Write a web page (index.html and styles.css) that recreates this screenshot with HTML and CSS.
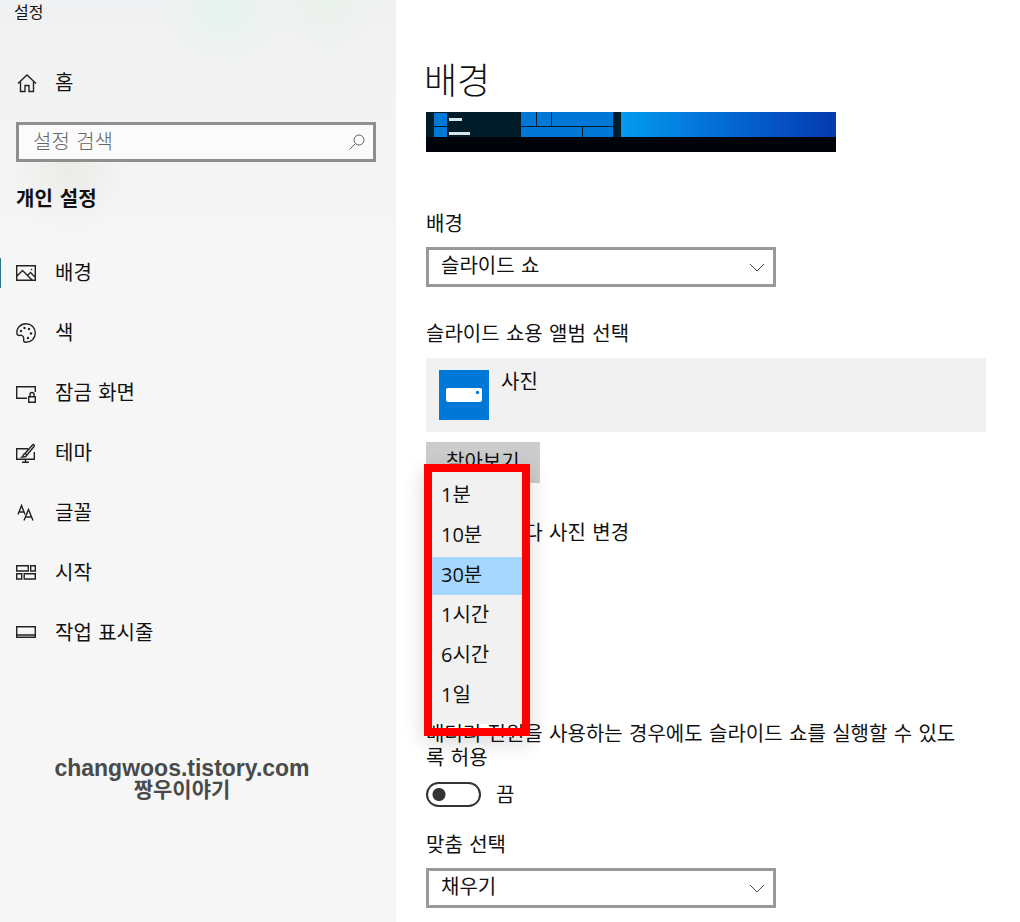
FILE: index.html
```html
<!DOCTYPE html>
<html lang="ko">
<head>
    <meta charset="UTF-8">
    <meta name="viewport" content="width=device-width, initial-scale=1.0">
    <title>설정</title>
    <link rel="stylesheet" href="styles.css">
</head>
<body>
<aside class="sidebar">
    <div class="window-title">설정</div>

    <a class="nav-item home" href="#">
        <svg class="icon" viewBox="0 0 20 20"><path d="M2 10.500 11 2l9 8.500M4.500 9v9.500h4.500v-6h4v6h4.500V9"/></svg>
        <span>홈</span>
    </a>

    <form class="search">
        <input type="search" aria-label="설정 검색" placeholder="설정 검색">
        <svg class="search-icon" viewBox="0 0 16 16"><circle cx="10" cy="6" r="5"/><path d="M6.500 9.500.5 15.500"/></svg>
    </form>

    <h2 class="section">개인 설정</h2>

    <nav>
        <a class="nav-item active" href="#">
            <svg class="icon" viewBox="0 0 20 20"><path d="M.7 2.700h18.600v14.600H.7zM1 13l5.500-5.500 9.500 9.500M11.500 12.500l3-3 4.500 4.500"/><circle class="dot" cx="15.500" cy="6.500" r=".8"/></svg>
            <span>배경</span>
        </a>
        <a class="nav-item" href="#">
            <svg class="icon" viewBox="0 0 20 20"><path d="M1 11C0 5 4.500 .8 10 .8c5.500 0 9.300 4 9.300 9.200 0 5.500-4.300 9.300-9.300 9.300-3.500 0-2-2.500-2.300-4.300-.3-1.500-1-2-1.700-2.500C4.500 11.500 2 14 1 11z"/><circle class="dot" cx="5" cy="8" r="1.200"/><circle class="dot" cx="8.500" cy="5" r="1.200"/><circle class="dot" cx="13" cy="6" r="1.200"/><circle class="dot" cx="15" cy="10.500" r="1.200"/><circle class="dot" cx="12" cy="15" r="1.200"/></svg>
            <span>색</span>
        </a>
        <a class="nav-item" href="#">
            <svg class="icon" viewBox="0 0 20 20"><path d="M11 15.300H.7V3.700h18.600V9M12.700 13.700h6.600v5.600h-6.600zM14 13.500V11.500a2 2 0 0 1 4 0v2"/></svg>
            <span>잠금 화면</span>
        </a>
        <a class="nav-item" href="#">
            <svg class="icon" viewBox="0 0 20 20"><path d="M12 5.700H.7v10.600h17.600V9M9.500 16.500v2.500M6 19.200h7M9 10.500 16.500 2c1-1 2.500.2 1.500 1.500L11 12M9 10.500l2 1.500c-.5 2-2.500 2-5 2 1.500-1 1-3 3-3.500z"/></svg>
            <span>테마</span>
        </a>
        <a class="nav-item" href="#">
            <svg class="icon" viewBox="0 0 20 20"><path d="M2 11.500 5.500 2.500 9 11.500M3.300 9h4.400M8 17.500l4.500-11L17 17.500M9.500 14h6"/></svg>
            <span>글꼴</span>
        </a>
        <a class="nav-item" href="#">
            <svg class="icon" viewBox="0 0 20 20"><path d="M.7 2.700h11.600v5.300H.7zM14.700 2.700h4.600v5.300h-4.600zM.7 10.700h5v5.300h-5zM8.200 10.700h11.100v5.300H8.200z"/></svg>
            <span>시작</span>
        </a>
        <a class="nav-item" href="#">
            <svg class="icon" viewBox="0 0 20 20"><path d="M.7 3.700h18.600v10.600H.7zM1 12h18"/></svg>
            <span>작업 표시줄</span>
        </a>
    </nav>

    <div class="credit">
        <div class="credit-url">changwoos.tistory.com</div>
        <div>짱우이야기</div>
    </div>
</aside>

<main class="content">
    <h1>배경</h1>

    <svg class="preview" viewBox="0 0 410 40" aria-hidden="true">
        <defs>
            <linearGradient id="wallpaper" x1="0" y1="0" x2="1" y2="0">
                <stop offset="0" stop-color="#039cee"/>
                <stop offset="0.5" stop-color="#0468d4"/>
                <stop offset="1" stop-color="#0539b0"/>
            </linearGradient>
        </defs>
        <path fill="#000408" d="M0 0h410v40H0z"/>
        <path fill="#001c28" d="M0 0h195v25H0z"/>
        <path fill="#0078d7" d="M8 1h13v13H8zM8 15h13v10H8zM95 0h15v14H95zM111 0h14v14h-14zM126 0h61v14h-61zM95 15h61v10H95zM157 15h30v10h-30z"/>
        <path fill="#d5e5e8" d="M23 6h13v3H23zM23 20h21v3H23z"/>
        <path fill="url(#wallpaper)" d="M195 0h215v25H195z"/>
    </svg>

    <div class="field background">
        <label for="background">배경</label>
        <div class="select">
            <select id="background"><option>슬라이드 쇼</option></select>
            <svg viewBox="0 0 16 10"><path d="m1 1 7 7 7-7"/></svg>
        </div>
    </div>

    <div class="field albums">
        <h3>슬라이드 쇼용 앨범 선택</h3>
        <div class="album">
            <svg class="drive" viewBox="0 0 50 50"><path fill="#0078d7" d="M0 0h50v50H0z"/><rect x="7" y="18" width="36" height="14" rx="2" fill="#fff"/><circle cx="38.500" cy="22.500" r="1.700" fill="#0078d7"/></svg>
            <span>사진</span>
        </div>
        <button class="browse" type="button">찾아보기</button>
    </div>

    <div class="field interval">
        <label for="interval">다음 간격마다 사진 변경</label>
        <div class="interval-select">
            <select id="interval"><option>30분</option></select>
            <div class="highlight">
                <ul class="menu" role="listbox">
                    <li role="option">1분</li>
                    <li role="option">10분</li>
                    <li role="option" class="selected" aria-selected="true">30분</li>
                    <li role="option">1시간</li>
                    <li role="option">6시간</li>
                    <li role="option">1일</li>
                </ul>
            </div>
        </div>
    </div>

    <div class="field battery">
        <label for="battery">배터리 전원을 사용하는 경우에도 슬라이드 쇼를 실행할 수 있도록 허용</label>
        <div class="toggle">
            <input id="battery" type="checkbox" role="switch">
            <span>끔</span>
        </div>
    </div>

    <div class="field">
        <label for="fit">맞춤 선택</label>
        <div class="select">
            <select id="fit"><option>채우기</option></select>
            <svg viewBox="0 0 16 10"><path d="m1 1 7 7 7-7"/></svg>
        </div>
    </div>
</main>
</body>
</html>
```
FILE: styles.css
```css
* {
    box-sizing: border-box;
}

body {
    display: flex;
    min-height: 100vh;
    margin: 0;
    background-color: #fff;
    color: #111;
    font-family: "DejaVu Sans", "Noto Sans CJK KR", sans-serif;
    font-size: 20px;
    font-weight: 400;
    line-height: 24px;
}

input, select, button {
    font: inherit;
    color: inherit;
    border-radius: 0;
}

h1, h2, h3, ul {
    margin: 0;
    padding: 0;
    font-size: inherit;
    font-weight: inherit;
}

/* Sidebar */
.sidebar {
    flex: 0 0 396px;
    background:
        radial-gradient(circle at 225px 5px, #e4f3ed, transparent 60px),
        radial-gradient(circle at 325px 0, #e9f1ea, transparent 50px),
        radial-gradient(circle at 70px 170px, #ebebe7, transparent 60px),
        linear-gradient(#f0f1f2, #f6f6f6 260px);
}

.window-title {
    padding: 1px 0 0 14px;
    font-size: 16px;
}

.nav-item {
    display: flex;
    align-items: center;
    gap: 19px;
    height: 60px;
    padding-left: 16px;
    color: inherit;
    text-decoration: none;
}

.home {
    margin: 28px 0 9px;
}

.icon {
    width: 20px;
    height: 20px;
    fill: none;
    stroke: #222;
    stroke-width: 1.4;
    overflow: visible;
}

.icon .dot {
    fill: #222;
    stroke: none;
}

.search {
    position: relative;
    margin: 0 20px 25px 16px;
}

.search input {
    display: block;
    width: 100%;
    height: 40px;
    padding: 0 40px 0 14px;
    border: 3px solid #8f8f8f;
    background-color: #fbfbfb;
    appearance: none;
}

.search input::placeholder {
    color: #666;
    font-weight: 300;
}

.search-icon {
    position: absolute;
    top: 12px;
    right: 11px;
    width: 16px;
    height: 16px;
    fill: none;
    stroke: #666;
}

.section {
    margin-bottom: 32px;
    padding-left: 16px;
    font-weight: 700;
}

.active {
    background: linear-gradient(#2a7788, #2a7788) 0 center / 1px 30px no-repeat;
}

.credit {
    width: 364px;
    margin-top: 95px;
    color: #4a4a4a;
    font-family: "Noto Sans CJK KR", sans-serif;
    font-size: 21px;
    font-weight: 700;
    line-height: 20px;
    text-align: center;
}

.credit-url {
    font-family: "Liberation Sans", Arial, sans-serif;
    font-size: 23px;
}

/* Content */
.content {
    flex: 1;
    padding: 58px 34px 12px 30px;
}

h1 {
    margin-left: -2px;
    font-size: 36px;
    font-weight: 300;
    line-height: 48px;
}

.preview {
    display: block;
    width: 410px;
    max-width: 100%;
    margin: 6px 0 60px;
}

.field {
    margin-bottom: 26px;
}

.field label, .field h3 {
    display: block;
}

.background {
    margin-bottom: 35px;
}

.select {
    position: relative;
    max-width: 350px;
    margin-top: 11px;
}

select {
    display: block;
    width: 100%;
    height: 40px;
    padding: 0 36px 2px 12px;
    border: 3px solid #999;
    background-color: #fff;
    appearance: none;
}

.select svg {
    position: absolute;
    top: 16px;
    right: 11px;
    width: 16px;
    height: 10px;
    fill: none;
    stroke: #444;
}

.album {
    display: flex;
    gap: 12px;
    margin: 12px 0 10px;
    padding: 12px 13px;
    background-color: #f1f1f1;
}

.drive {
    width: 50px;
    height: 50px;
}

.browse {
    display: block;
    height: 41px;
    padding: 0 20px 2px;
    border: 0;
    background-color: #ccc;
}

.albums {
    margin-bottom: 38px;
}

.interval {
    margin-bottom: 126px;
}

.interval-select {
    position: relative;
    width: 90px;
    margin-top: 11px;
}

.interval-select select {
    padding-right: 0;
}

.highlight {
    position: absolute;
    top: -92px;
    left: -2px;
    width: 106px;
    height: 272px;
    border: 8px solid #f00;
    box-shadow: 0 6px 20px rgba(0, 0, 0, 0.16);
}

.menu {
    padding: 5px 0 7px;
    background-color: #f1f1f1;
    font-family: "Open Sans", "Noto Sans CJK KR", sans-serif;
    list-style: none;
}

.menu li {
    height: 38px;
    margin-bottom: 2px;
    padding: 6px 9px;
}

.menu .selected {
    background-color: #a6d8ff;
}

.battery label {
    max-width: 545px;
    margin-bottom: 12px;
}

.toggle {
    display: flex;
    align-items: center;
    gap: 15px;
}

.toggle input {
    width: 55px;
    height: 25px;
    margin: 0;
    border: 2px solid #333;
    border-radius: 13px;
    background: radial-gradient(circle at 11px 50%, #333 6px, transparent 7px);
    appearance: none;
}
```
